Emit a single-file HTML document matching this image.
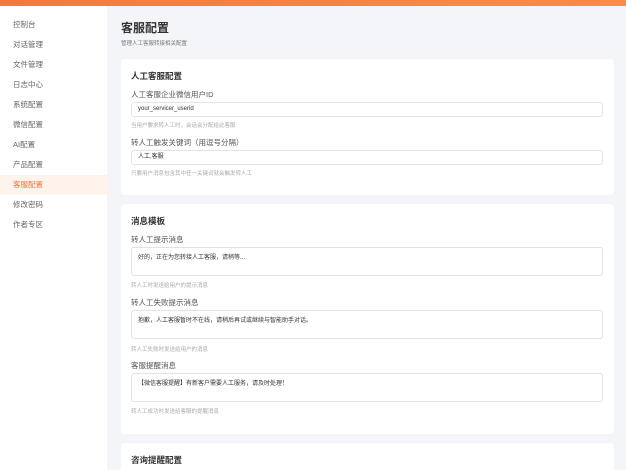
<!DOCTYPE html>
<html style="width:626px;height:470px;overflow:hidden"><head><meta charset="utf-8"><style>
*{box-sizing:border-box;margin:0;padding:0}
body{width:626px;height:470px;overflow:hidden;background:#f4f5f8;font-family:"Liberation Sans","Noto Sans CJK SC",sans-serif;position:relative}
.top{position:absolute;left:0;top:0;width:626px;height:6px;background:linear-gradient(90deg,#f57a3a,#ff8a45)}
.side{position:absolute;left:0;top:6px;width:107px;height:464px;background:#fff}
.side div{position:absolute;left:0;width:107px;height:20px;line-height:20px;padding-left:13px;font-size:7.5px;color:#666}
.side .act{background:#fff3ec;color:#f4733b}
.abs{position:absolute;white-space:nowrap}
.card{position:absolute;left:121px;width:493px;background:#fff;border-radius:4px}
.h{font-size:8.5px;font-weight:bold;color:#333}
.l{font-size:7.5px;color:#555}
.hint{font-size:5.5px;color:#aaa}
.in{position:absolute;left:131px;width:472px;border:1px solid #e3e3e3;border-radius:3px;background:#fff;font-size:6px;color:#333;padding-left:6px}
</style></head><body>
<div class="top"></div>
<div class="side">
<div style="top:9px">控制台</div>
<div style="top:29px">对话管理</div>
<div style="top:49px">文件管理</div>
<div style="top:69px">日志中心</div>
<div style="top:89px">系统配置</div>
<div style="top:109px">微信配置</div>
<div style="top:129px">AI配置</div>
<div style="top:149px">产品配置</div>
<div class="act" style="top:169px">客服配置</div>
<div style="top:189px">修改密码</div>
<div style="top:209px">作者专区</div>
</div>
<div class="abs" style="left:121px;top:19px;font-size:12px;font-weight:bold;color:#333">客服配置</div>
<div class="abs" style="left:121px;top:39px;font-size:5.5px;color:#777">管理人工客服转接相关配置</div>
<div class="card" style="top:59px;height:136px"></div>
<div class="card" style="top:204px;height:230px"></div>
<div class="card" style="top:443px;height:27px;border-radius:4px 4px 0 0"></div>

<div class="abs h" style="left:131px;top:70px">人工客服配置</div>
<div class="abs l" style="left:131px;top:89px">人工客服企业微信用户ID</div>
<div class="in" style="top:102px;height:15px;line-height:13px">your_servicer_userid</div>
<div class="abs hint" style="left:131px;top:121px">当用户要求转人工时，会话会分配给此客服</div>
<div class="abs l" style="left:131px;top:137px">转人工触发关键词（用逗号分隔）</div>
<div class="in" style="top:150px;height:15px;line-height:13px">人工,客服</div>
<div class="abs hint" style="left:131px;top:169px">只要用户消息包含其中任一关键词就会触发转人工</div>

<div class="abs h" style="left:131px;top:215px">消息模板</div>
<div class="abs l" style="left:131px;top:234px">转人工提示消息</div>
<div class="in" style="top:247px;height:29px;padding-top:4px">好的，正在为您转接人工客服，请稍等...</div>
<div class="abs hint" style="left:131px;top:281px">转人工时发送给用户的提示消息</div>
<div class="abs l" style="left:131px;top:297px">转人工失败提示消息</div>
<div class="in" style="top:310px;height:29px;padding-top:4px">抱歉，人工客服暂时不在线，请稍后再试或继续与智能助手对话。</div>
<div class="abs hint" style="left:131px;top:345px">转人工失败时发送给用户的消息</div>
<div class="abs l" style="left:131px;top:360px">客服提醒消息</div>
<div class="in" style="top:373px;height:29px;padding-top:4px">【微信客服提醒】有新客户需要人工服务，请及时处理！</div>
<div class="abs hint" style="left:131px;top:407px">转人工成功时发送给客服的提醒消息</div>

<div class="abs h" style="left:131px;top:454px">咨询提醒配置</div>
</body></html>
